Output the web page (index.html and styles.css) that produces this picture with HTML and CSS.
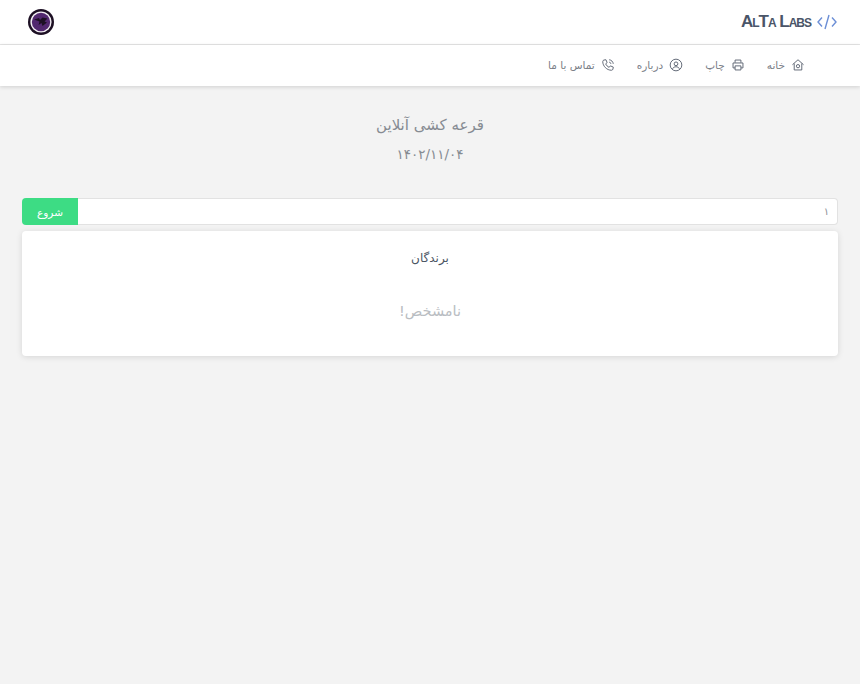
FILE: index.html
```html
<!DOCTYPE html>
<html lang="fa" dir="rtl">
<head>
    <meta charset="UTF-8">
    <meta name="viewport" content="width=device-width, initial-scale=1.0">
    <title>قرعه کشی آنلاین</title>
    <link rel="stylesheet" href="styles.css">
</head>
<body>
    <header class="topbar">
        <div class="brand">
            <svg class="brand-icon" viewBox="0 0 20 16" fill="none" stroke="#6c8fd6" stroke-width="1.4">
                <path d="M5 3.500 1 8l4 4.500M8 15l4-14M15 3.500 19 8l-4 4.500"/>
            </svg>
            <span class="brand-name" dir="ltr">AlTa Labs</span>
        </div>
        <svg class="avatar" viewBox="0 0 26 26">
            <circle cx="13" cy="13" r="13" fill="#1d1024"/>
            <circle cx="13" cy="13" r="10.600" fill="#f4f0f5"/>
            <circle cx="13" cy="13" r="9.200" fill="#52286f"/>
            <path d="M6 10.500l5-1.500 1 2 2.500-2.500 5 1-3 3 2.500 1-4.500 3.500-1-3-3 2 1-3.500z" fill="#1d1024"/>
        </svg>
    </header>

    <nav class="navbar">
        <a class="nav-item">
            <svg class="nav-icon" viewBox="0 0 24 24"><path d="M2.500 11.500 12 3l9.500 8.500M5.500 9.500V20.500H18.500V9.500"/><circle cx="12" cy="14" r="2.800"/></svg>
            خانه
        </a>
        <a class="nav-item">
            <svg class="nav-icon" viewBox="0 0 24 24"><path d="M7 8V3.500H17V8M7 17H3.500V8.500H20.500V17H17"/><path d="M7 13.500H17V20.500H7z"/></svg>
            چاپ
        </a>
        <a class="nav-item">
            <svg class="nav-icon" viewBox="0 0 24 24"><circle cx="12" cy="12" r="10"/><circle cx="12" cy="10" r="3.200"/><path d="M6 18.500c1.500-2.500 3.500-3.500 6-3.500s4.500 1 6 3.500"/></svg>
            درباره
        </a>
        <a class="nav-item">
            <svg class="nav-icon" viewBox="0 0 24 24"><path d="M5 3.500 8.500 3l2 5-2.500 2c1 2.500 3.500 5 6 6l2-2.500 5 2-.5 3.500c-.2 1.300-1.500 2-2.500 2C10 21 3 14 3 6c0-1 .7-2.300 2-2.500z"/><path d="M14 7c1.700.3 2.700 1.300 3 3M14 3c3.800.4 6.600 3.200 7 7"/></svg>
            تماس با ما
        </a>
    </nav>

    <main class="content">
        <div class="heading">
            <h1>قرعه کشی آنلاین</h1>
            <p class="date">۱۴۰۲/۱۱/۰۴</p>
        </div>

        <form class="draw-form">
            <input class="count-input" type="text" value="۱">
            <button class="start-btn" type="button">شروع</button>
        </form>

        <section class="card">
            <h2>برندگان</h2>
            <p class="winner">نامشخص!</p>
        </section>
    </main>
</body>
</html>
```

FILE: styles.css
```css
* {
    box-sizing: border-box;
}
body {
    margin: 0;
    min-height: 684px;
    background: #f3f3f3;
    color: #6b7280;
    font-family: "DejaVu Sans", "Noto Sans", sans-serif;
}
.topbar {
    display: flex;
    justify-content: space-between;
    align-items: center;
    height: 45px;
    padding: 0 23px 0 28px;
    background: white;
    border-bottom: 1px solid #e6e6e6;
}
.brand {
    display: flex;
    align-items: center;
    gap: 6px;
}
.brand-icon {
    flex: none;
    width: 20px;
    height: 16px;
}
.brand-name {
    color: #4a5568;
    font-family: "Liberation Sans", sans-serif;
    font-size: 17px;
    font-weight: bold;
    font-variant: small-caps;
    letter-spacing: -1px;
    white-space: nowrap;
}
.avatar {
    flex: none;
    width: 26px;
    height: 26px;
}
.navbar {
    display: flex;
    align-items: center;
    gap: 22px;
    height: 41px;
    padding: 0 55px 1px;
    background: white;
    box-shadow: 0 1px 4px rgba(0,0,0,0.15);
}
.nav-item {
    display: flex;
    align-items: center;
    gap: 6px;
    font-size: 10.500px;
    color: #7b8088;
}
.nav-icon {
    width: 14px;
    height: 14px;
    fill: none;
    stroke: #5a6270;
    stroke-width: 1.600;
}
.content {
    padding: 0 22px;
}
.heading {
    padding-top: 27px;
    text-align: center;
}
h1 {
    margin: 0;
    font-size: 15px;
    font-weight: normal;
    line-height: 24px;
    color: #868b92;
}
.date {
    margin: 5px 0 0;
    font-size: 13.500px;
    line-height: 24px;
    color: #868b92;
}
.draw-form {
    display: flex;
    height: 27px;
    margin-top: 32px;
}
.count-input {
    flex: 1;
    min-width: 0;
    padding: 0 8px;
    font-family: inherit;
    font-size: 10px;
    color: #8b9096;
    background: white;
    border: 1px solid #e2e2e2;
    border-left: none;
    border-radius: 0 4px 4px 0;
}
.start-btn {
    width: 56px;
    padding: 0;
    font-family: inherit;
    font-size: 10.500px;
    color: white;
    background: #3ddc84;
    border: none;
    border-radius: 4px 0 0 4px;
}
.card {
    height: 125px;
    margin-top: 6px;
    padding-top: 15px;
    text-align: center;
    background: white;
    border-radius: 4px;
    box-shadow: 0 1px 6px rgba(0,0,0,0.12);
}
h2 {
    margin: 0;
    font-size: 12px;
    font-weight: normal;
    line-height: 24px;
    color: #4b5563;
}
.winner {
    margin: 29px 0 0;
    font-size: 14.500px;
    line-height: 24px;
    color: #b9bdc2;
}
```
